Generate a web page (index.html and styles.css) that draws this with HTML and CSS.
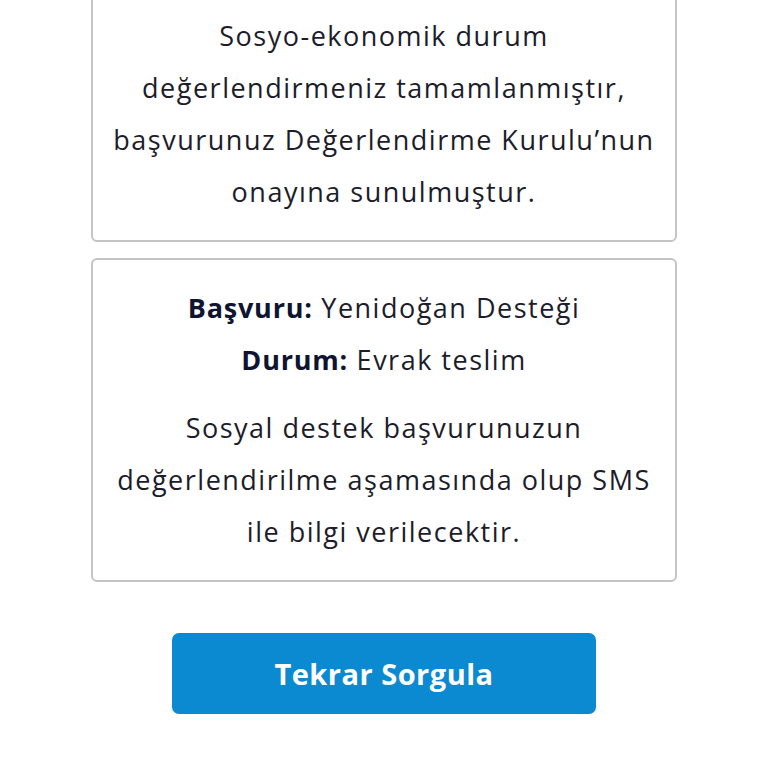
FILE: index.html
```html
<!DOCTYPE html>
<html lang="tr">
<head>
<meta charset="utf-8">
<link rel="stylesheet" href="styles.css">
</head>
<body>
<main class="page">
  <section class="card">
    <p class="text">Sosyo-ekonomik durum<br>değerlendirmeniz tamamlanmıştır,<br>başvurunuz Değerlendirme Kurulu’nun<br>onayına sunulmuştur.</p>
  </section>
  <section class="card">
    <p class="text"><b class="label">Başvuru:</b> Yenidoğan Desteği<br><b class="label">Durum:</b> Evrak teslim</p>
    <p class="text second">Sosyal destek başvurunuzun<br>değerlendirilme aşamasında olup SMS<br>ile bilgi verilecektir.</p>
  </section>
  <button class="btn" type="button">Tekrar Sorgula</button>
</main>
</body>
</html>
```
FILE: styles.css
```css
html, body {
  margin: 0;
  padding: 0;
  background: #ffffff;
}
body {
  font-family: "Open Sans", "Liberation Sans", sans-serif;
  color: #1c1c2a;
  overflow: hidden;
}
.page {
  width: 586px;
  margin: -14px auto 0;
  display: flex;
  flex-direction: column;
  align-items: center;
}
.card {
  box-sizing: border-box;
  width: 586px;
  border: 2px solid #c4c4c8;
  border-radius: 6px;
  padding: 22px 0;
  margin-bottom: 16px;
}
.text {
  margin: 0;
  font-size: 27px;
  letter-spacing: 1.5px;
  line-height: 52px;
  text-align: center;
  white-space: nowrap;
}
.second {
  margin-top: 16px;
}
.label {
  font-weight: 700;
  color: #0f1430;
  letter-spacing: 0.8px;
}
.btn {
  margin-top: 35px;
  width: 424px;
  height: 81px;
  border: none;
  border-radius: 7px;
  background: #0b89d1;
  color: #ffffff;
  font-family: inherit;
  font-size: 29px;
  letter-spacing: 0.5px;
  font-weight: 700;
}
```
